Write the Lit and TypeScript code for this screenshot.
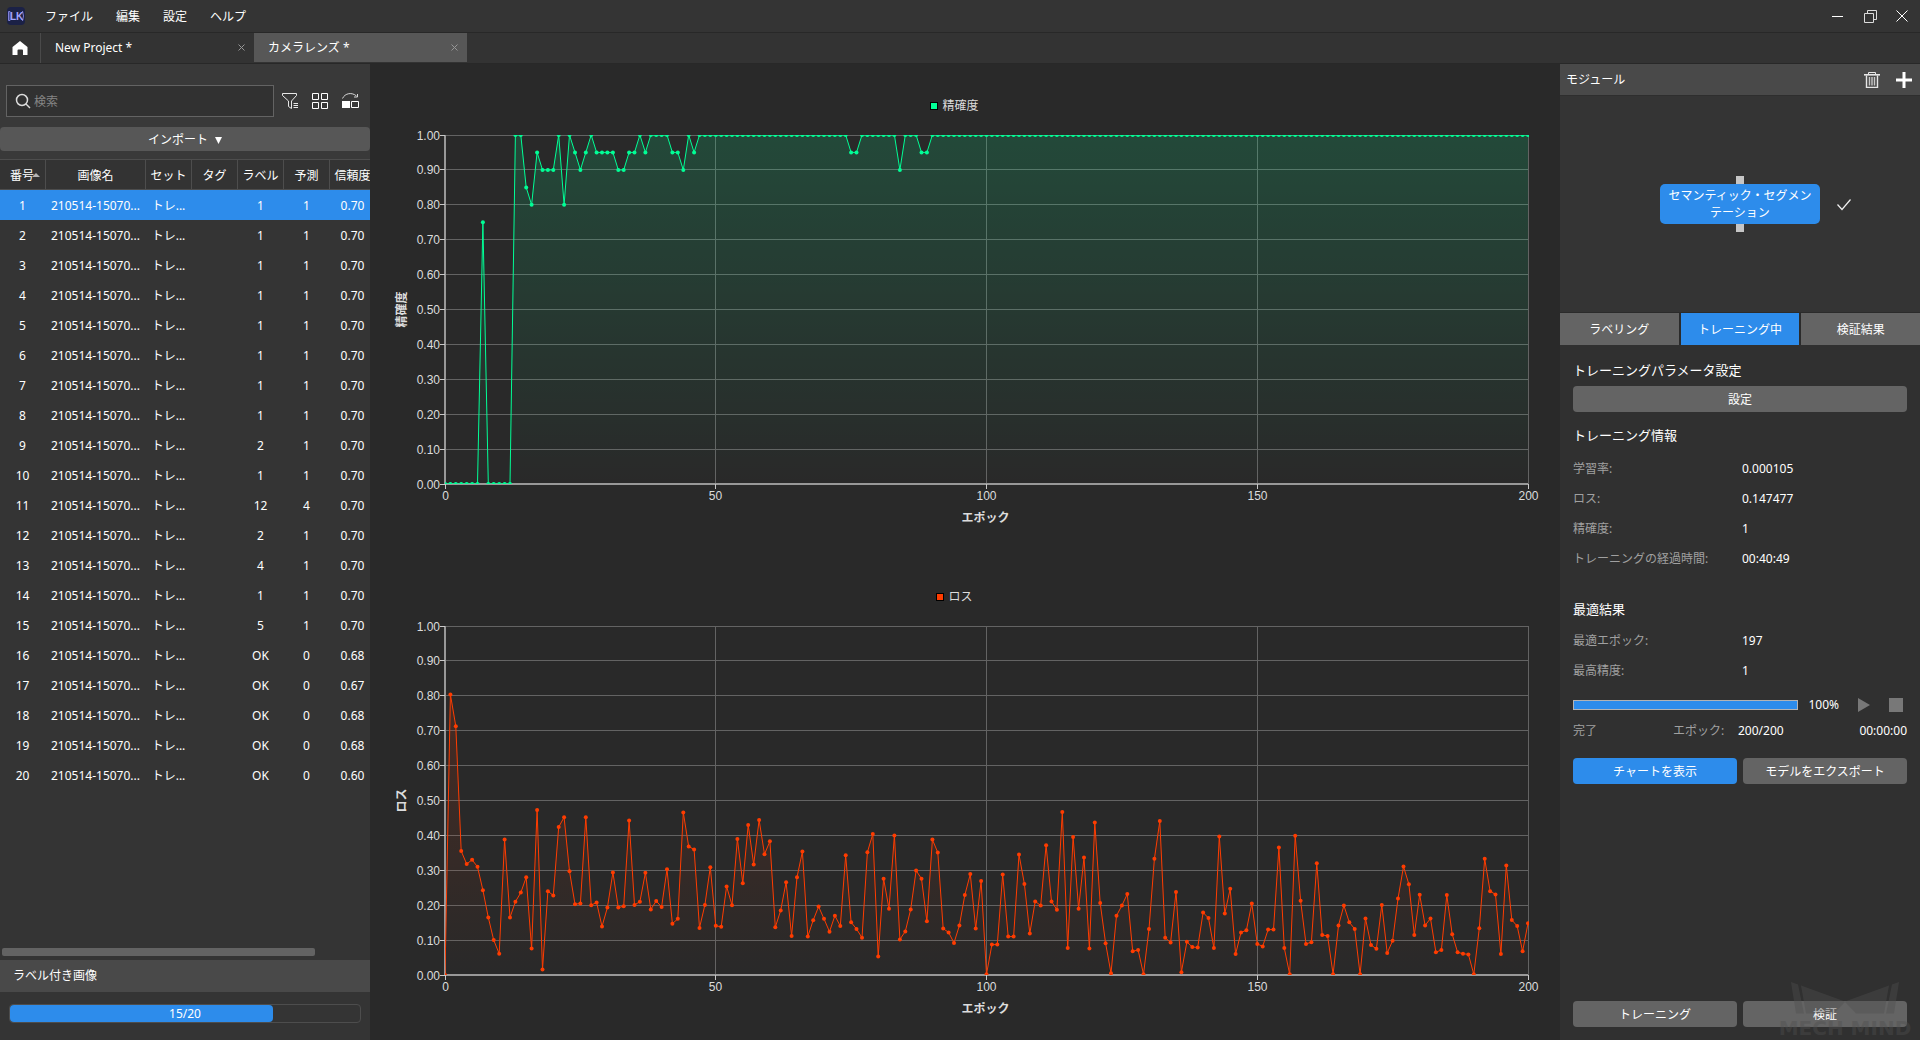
import { LitElement, html, svg, css, nothing } from "lit";
import { customElement, property, state } from "lit/decorators.js";
import { classMap } from "lit/directives/class-map.js";
import { styleMap } from "lit/directives/style-map.js";

/** Accuracy per epoch: runs of [value, number of epochs]. */
const ACCURACY_RUNS: Array<[number, number]> = [
  [0, 7], [0.75, 1], [0, 5], [1, 2], [0.85, 1], [0.8, 1], [0.95, 1], [0.9, 3],
  [1, 1], [0.8, 1], [1, 1], [0.95, 1], [0.9, 1], [0.95, 1], [1, 1], [0.95, 4],
  [0.9, 2], [0.95, 2], [1, 1], [0.95, 1], [1, 4], [0.95, 2], [0.9, 1], [1, 1],
  [0.95, 1], [1, 28], [0.95, 2], [1, 7], [0.9, 1], [1, 3], [0.95, 2], [1, 111],
];
const ACCURACY = ACCURACY_RUNS.flatMap(([v, n]) => Array<number>(n).fill(v));

/** Loss per epoch, in thousandths. */
const LOSS = [
  0, 804, 713, 355, 318, 330, 310, 243, 165, 100, 61, 388, 165, 210, 236, 280, 76, 473, 16, 240,
  228, 424, 452, 297, 203, 205, 452, 200, 208, 139, 193, 294, 193, 197, 443, 201, 210, 293, 188, 212,
  195, 303, 147, 161, 466, 368, 360, 135, 201, 309, 141, 138, 254, 200, 390, 263, 430, 317, 444, 346,
  383, 137, 185, 266, 112, 280, 354, 110, 157, 196, 161, 124, 170, 140, 343, 151, 132, 107, 352, 404,
  53, 276, 190, 400, 102, 125, 188, 299, 276, 154, 388, 351, 133, 122, 92, 142, 229, 289, 133, 269,
  2, 87, 87, 288, 110, 110, 345, 261, 119, 211, 199, 372, 211, 187, 467, 77, 395, 190, 337, 76,
  437, 206, 91, 5, 170, 199, 232, 68, 72, 2, 132, 333, 441, 107, 93, 238, 8, 95, 80, 79,
  179, 163, 77, 397, 176, 247, 60, 122, 128, 205, 89, 82, 130, 130, 365, 77, 2, 399, 213, 89,
  94, 320, 115, 112, 2, 142, 199, 151, 132, 2, 162, 86, 75, 201, 63, 98, 219, 311, 260, 115,
  230, 142, 162, 65, 72, 229, 117, 65, 61, 59, 2, 134, 333, 240, 231, 60, 314, 158, 140, 68,
  148,
].map((v) => v / 1000);

interface ImageRow {
  id: number;
  label: string;
  predicted: string;
  confidence: string;
}

const LABELS = ["1", "1", "1", "1", "1", "1", "1", "1", "2", "1", "12", "2", "4", "1", "5", "OK", "OK", "OK", "OK", "OK"];
const CONFIDENCE: Record<number, string> = { 16: "0.68", 17: "0.67", 18: "0.68", 19: "0.68", 20: "0.60" };
const ROWS: ImageRow[] = LABELS.map((label, i) => ({
  id: i + 1,
  label,
  predicted: label === "OK" ? "0" : label === "12" ? "4" : "1",
  confidence: CONFIDENCE[i + 1] ?? "0.70",
}));

const FONT = css`12px/18px "Noto Sans", "Noto Sans CJK JP", sans-serif`;

@customElement("metric-chart")
export class MetricChart extends LitElement {
  @property() name = "";
  @property() color = "#ffffff";
  @property({ type: Number }) strength = 0.2;
  @property({ attribute: false }) values: number[] = [];
  @state() private w = 0;
  @state() private h = 0;
  private observer?: ResizeObserver;

  static styles = css`
    :host {
      display: block;
      min-width: 0;
      min-height: 0;
      overflow: hidden;
      contain: size;
    }
    svg {
      display: block;
    }
    text {
      font: 12px "Liberation Sans", "Noto Sans CJK JP", sans-serif;
      fill: #dcdcdc;
    }
    .title {
      font-weight: bold;
    }
    .grid {
      stroke: #636363;
    }
    .axis {
      stroke: #989898;
      stroke-width: 2;
    }
    .tick {
      stroke: #c8c8c8;
    }
    .series {
      fill: none;
      stroke-width: 1;
    }
  `;

  connectedCallback() {
    super.connectedCallback();
    this.observer = new ResizeObserver(() => this.measure());
    this.observer.observe(this);
  }

  disconnectedCallback() {
    this.observer?.disconnect();
    super.disconnectedCallback();
  }

  firstUpdated() {
    this.measure();
  }

  private measure() {
    this.w = this.clientWidth;
    this.h = this.clientHeight;
  }

  render() {
    const { w, h, color } = this;
    if (!w || !h) return nothing;
    const left = 75, right = w - 32, top = 71, bottom = h - 65;
    const x = (n: number) => left + (n / 200) * (right - left);
    const y = (v: number) => bottom - v * (bottom - top);
    const snap = (n: number) => Math.floor(n) + 0.5;
    const points = this.values.map((v, i) => `${x(i).toFixed(1)},${y(v).toFixed(1)}`).join(" ");
    const levels = Array.from({ length: 11 }, (_, i) => i / 10);
    const epochs = [0, 50, 100, 150, 200];
    const mid = (left + right) / 2;
    const legend = snap(mid - 38 - this.name.length * 6);
    return html`<svg width=${w} height=${h} role="img" aria-label=${this.name}>
      <defs>
        <linearGradient id="fade" x1="0" y1="0" x2="0" y2="1">
          <stop offset="0" stop-color=${color} stop-opacity=${this.strength}></stop>
          <stop offset="1" stop-color=${color} stop-opacity="0"></stop>
        </linearGradient>
        <clipPath id="plot"><rect x=${left} y=${top} width=${right - left + 1} height=${bottom - top}></rect></clipPath>
      </defs>
      <rect x=${legend} y="38.5" width="7" height="7" fill=${color} stroke="#000"></rect>
      <text x=${legend + 12} y="46">${this.name}</text>
      ${levels.map((v) => svg`<line class="grid" x1=${left} x2=${right} y1=${snap(y(v))} y2=${snap(y(v))}></line>`)}
      ${epochs.map((n) => svg`<line class="grid" y1=${top} y2=${bottom} x1=${snap(x(n))} x2=${snap(x(n))}></line>`)}
      <line class="axis" x1=${left} x2=${left} y1=${top} y2=${bottom + 1}></line>
      <line class="axis" x1=${left} x2=${right} y1=${bottom} y2=${bottom}></line>
      ${levels.map((v) => svg`
        <line class="tick" x1=${left - 5} x2=${left} y1=${snap(y(v))} y2=${snap(y(v))}></line>
        <text x=${left - 5} y=${Math.floor(y(v)) + 5} text-anchor="end">${v.toFixed(2)}</text>`)}
      ${epochs.map((n) => svg`
        <line class="tick" y1=${bottom} y2=${bottom + 5} x1=${snap(x(n))} x2=${snap(x(n))}></line>
        <text x=${snap(x(n))} y=${bottom + 16} text-anchor="middle">${n}</text>`)}
      <g clip-path="url(#plot)">
        <polygon points="${left},${bottom} ${points} ${right},${bottom}" fill="url(#fade)"></polygon>
        <polyline class="series" points=${points} stroke=${color}></polyline>
        ${this.values.map((v, i) => svg`<circle cx=${x(i).toFixed(1)} cy=${y(v).toFixed(1)} r="2" fill=${color}></circle>`)}
      </g>
      <text class="title" x=${mid - 1} y=${bottom + 38} text-anchor="middle">エポック</text>
      <text class="title" text-anchor="middle" transform="translate(36 ${(top + bottom) / 2}) rotate(-90)">${this.name}</text>
    </svg>`;
  }
}

@customElement("image-panel")
export class ImagePanel extends LitElement {
  @state() private selected = 1;

  static styles = css`
    :host {
      display: flex;
      flex-direction: column;
      min-height: 0;
      background: #343434;
      color: #fff;
      font: ${FONT};
    }
    button {
      font: inherit;
      color: inherit;
      border: 0;
      padding: 0;
      background: none;
    }
    .tools {
      background: #393939;
      padding-top: 21px;
    }
    .bar {
      display: flex;
      align-items: center;
      gap: 6px;
      padding: 0 8px 0 6px;
    }
    .search {
      flex: 1;
      display: flex;
      align-items: center;
      gap: 2px;
      height: 30px;
      margin-right: -2px;
      padding-left: 8px;
      border: 1px solid #636363;
      background: #313131;
    }
    .search input {
      flex: 1;
      min-width: 0;
      border: 0;
      outline: 0;
      padding: 2px 0 0;
      background: none;
      color: #fff;
      font: inherit;
    }
    .search input::placeholder {
      color: #858585;
    }
    .icon {
      width: 24px;
      height: 24px;
      display: grid;
      place-items: center;
    }
    .import {
      width: 100%;
      height: 24px;
      margin: 10px 0 8px;
      padding-top: 2px;
      display: flex;
      justify-content: center;
      align-items: center;
      gap: 7px;
      border-radius: 4px;
      background: #575757;
    }
    .list {
      flex: 1;
      min-height: 0;
      overflow: hidden;
    }
    table {
      width: 376px;
      table-layout: fixed;
      border-collapse: separate;
      border-spacing: 0;
    }
    .name {
      width: 99px;
    }
    th {
      height: 27px;
      padding: 2px 0 0;
      font-weight: normal;
      white-space: nowrap;
      background: #333;
      border-top: 1px solid #4d4d4d;
      border-bottom: 1px solid #4d4d4d;
      border-right: 1px solid #4d4d4d;
    }
    .sort {
      margin-left: -2px;
      margin-right: -5px;
      vertical-align: 3px;
    }
    td {
      height: 29px;
      padding: 1px 1px 0 0;
      text-align: center;
      white-space: nowrap;
    }
    .selected td {
      background: #2d8ceb;
    }
    .scroll {
      height: 8px;
      margin: 0 2px 4px;
    }
    .thumb {
      width: 313px;
      height: 8px;
      border-radius: 2px;
      background: #636363;
    }
    .caption {
      padding: 7px 13px;
      background: #494949;
    }
    .progress {
      position: relative;
      margin: 12px 9px 17px;
      height: 17px;
      border: 1px solid #4d4d4d;
      border-radius: 4px;
    }
    .fill {
      height: 100%;
      border-radius: 4px;
      background: #2d8ceb;
    }
    .count {
      position: absolute;
      inset: 0;
      text-align: center;
    }
  `;

  render() {
    const heads = ["番号", "画像名", "セット", "タグ", "ラベル", "予測", "信頼度"];
    return html`
      <div class="tools">
        <div class="bar">
          <label class="search">
            <svg width="17" height="17" viewBox="0 0 17 17" fill="none" stroke="#dcdcdc" stroke-width="1.5" aria-hidden="true">
              <circle cx="7" cy="7" r="5.5"></circle><path d="M11 11l4 4"></path>
            </svg>
            <input type="text" placeholder="検索" aria-label="検索" />
          </label>
          <button class="icon" aria-label="フィルター">
            <svg width="18" height="18" viewBox="0 0 18 18" fill="none" stroke="#e8e8e8">
              <path d="M1.5 1.5h14v2L10.500 9v7.500l-3-2V9L1.500 3.500z"></path>
              <path d="M12.500 11.500h4.500M12.500 13.500h4.500M12.500 15.500h4.500"></path>
            </svg>
          </button>
          <button class="icon" aria-label="グリッド表示">
            <svg width="18" height="18" viewBox="0 0 18 18" fill="none" stroke="#fff">
              <path d="M1.5 1.5h6v6h-6zM10.500 1.500h6v6h-6zM1.500 10.500h6v6h-6zM10.500 10.500h6v6h-6z"></path>
            </svg>
          </button>
          <button class="icon" aria-label="切り替え">
            <svg width="18" height="18" viewBox="0 0 18 18" fill="none" stroke="#fff">
              <path d="M1.5 6.5C4 1 11 0 15.500 4M16.500 2v3h-3.500" stroke="#d8d8d8"></path>
              <path d="M1 9h8v7H1z" fill="#fff" stroke="none"></path>
              <path d="M10.500 9.500h7v6h-7z"></path>
            </svg>
          </button>
        </div>
        <button class="import">インポート
          <svg width="7" height="7" viewBox="0 0 7 7" aria-hidden="true"><path d="M0 0h7L3.500 7z" fill="#fff"></path></svg>
        </button>
      </div>
      <div class="list">
        <table>
          <thead>
            <tr>
              ${heads.map((head, i) => html`<th scope="col" class=${classMap({ name: i === 1 })}>${head}${i === 0
                ? html`<svg class="sort" width="8" height="4" viewBox="0 0 8 4"><path d="M4 0l4 4H0z" fill="#b4b4b4"></path></svg>`
                : nothing}</th>`)}
            </tr>
          </thead>
          <tbody>
            ${ROWS.map((row) => html`
              <tr class=${classMap({ selected: row.id === this.selected })} @click=${() => (this.selected = row.id)}>
                <td>${row.id}</td><td>210514-15070...</td><td>トレ...</td><td></td>
                <td>${row.label}</td><td>${row.predicted}</td><td>${row.confidence}</td>
              </tr>`)}
          </tbody>
        </table>
      </div>
      <div class="scroll"><div class="thumb"></div></div>
      <div class="caption">ラベル付き画像</div>
      <div class="progress" role="progressbar" aria-label="ラベル付き画像" aria-valuenow="15" aria-valuemax="20">
        <div class="fill" style=${styleMap({ width: `${(15 / 20) * 100}%` })}></div>
        <div class="count">15/20</div>
      </div>
    `;
  }
}

@customElement("module-panel")
export class ModulePanel extends LitElement {
  @state() private tab = 1;

  static styles = css`
    :host {
      display: flex;
      flex-direction: column;
      min-height: 0;
      background: #303030;
      color: #fff;
      font: ${FONT};
      position: relative;
    }
    button {
      font: inherit;
      color: inherit;
      border: 0;
      padding: 0;
      background: none;
    }
    .head {
      display: flex;
      align-items: center;
      gap: 8px;
      height: 31px;
      padding: 0 4px 0 6px;
      background: #494949;
      border-bottom: 1px solid #2e2e2e;
    }
    .head span {
      flex: 1;
    }
    .icon {
      width: 24px;
      height: 24px;
      display: grid;
      place-items: center;
    }
    .canvas {
      position: relative;
      height: 216px;
      display: grid;
      place-items: center;
      background: #343434;
    }
    .node {
      position: relative;
      width: 160px;
      height: 40px;
      padding: 0 6px;
      box-sizing: border-box;
      border-radius: 5px;
      background: #2d8ceb;
      line-height: 17px;
      text-align: center;
      display: grid;
      place-items: center;
    }
    .node::before,
    .node::after {
      content: "";
      position: absolute;
      left: 76px;
      width: 8px;
      height: 8px;
      background: #c6c6c6;
    }
    .node::before {
      top: -8px;
    }
    .node::after {
      bottom: -8px;
    }
    .check {
      position: absolute;
      left: 176px;
      top: 14px;
    }
    .tabs {
      display: grid;
      grid-template-columns: repeat(3, 1fr);
      gap: 2px;
      padding-top: 1px;
      background: #2b2b2b;
    }
    .tabs button {
      height: 32px;
      padding-top: 2px;
      background: #646464;
    }
    .tabs .on {
      background: #2d8ceb;
    }
    .body {
      flex: 1;
      display: flex;
      flex-direction: column;
      padding: 15px 13px 13px;
    }
    h2 {
      margin: 0;
      font-size: 13px;
      line-height: 20px;
      font-weight: normal;
    }
    .btn {
      height: 26px;
      padding-top: 1px;
      border-radius: 4px;
      background: #646464;
    }
    .wide {
      margin: 6px 0 13px;
    }
    .btn.primary {
      background: #2d8ceb;
    }
    dl {
      display: grid;
      grid-template-columns: 169px 1fr;
      grid-auto-rows: 30px;
      align-items: center;
      margin: 9px 0 0;
    }
    .info {
      margin-bottom: 25px;
    }
    .best {
      margin-top: 7px;
    }
    dt,
    .muted {
      color: #a0a0a0;
    }
    dd {
      margin: 0;
    }
    .run {
      display: flex;
      align-items: center;
      gap: 10px;
      margin-top: 8px;
    }
    .run span {
      margin-right: 4px;
    }
    .meter {
      flex: 1;
      height: 8px;
      border: 1px solid #b4b4b4;
    }
    .meter div {
      height: 100%;
      background: #2d8ceb;
    }
    .run button {
      display: grid;
      place-items: center;
      width: 22px;
      height: 22px;
    }
    .status {
      display: grid;
      grid-template-columns: 100px 65px 1fr auto;
      margin: 6px 0 18px;
    }
    .pair {
      display: grid;
      grid-template-columns: 1fr 1fr;
      gap: 6px;
    }
    .bottom {
      margin-top: auto;
    }
    .mark {
      position: absolute;
      right: 0;
      bottom: 0;
      overflow: visible;
      pointer-events: none;
      opacity: 0.4;
    }
    .mark text {
      font: bold 20px "DejaVu Sans", sans-serif;
    }
  `;

  render() {
    return html`
      <div class="head">
        <span>モジュール</span>
        <button class="icon" aria-label="削除">
          <svg width="16" height="16" viewBox="0 0 16 16" fill="none" stroke="#e6e6e6">
            <path d="M4.5 2V.5h7V2"></path><path d="M0 2.800h16" stroke-width="1.600"></path>
            <path d="M2.500 3.500v12h11v-12" stroke-width="1.400"></path>
            <path d="M5.500 5v8.500M8 5v8.500M10.500 5v8.500" stroke="#c8c8c8" stroke-width="1.400"></path>
          </svg>
        </button>
        <button class="icon" aria-label="追加">
          <svg width="16" height="16" viewBox="0 0 16 16" stroke="#fff" stroke-width="3"><path d="M8 0v16M0 8h16"></path></svg>
        </button>
      </div>
      <div class="canvas">
        <div class="node">セマンティック・セグメンテーション
          <svg class="check" width="16" height="14" viewBox="0 0 16 14" fill="none" stroke="#f0f0f0" stroke-width="1.200"><path d="M1.500 6.500l4.500 5L14.500 1.500"></path></svg>
        </div>
      </div>
      <div class="tabs">
        ${["ラベリング", "トレーニング中", "検証結果"].map((t, i) => html`
          <button class=${classMap({ on: i === this.tab })} @click=${() => (this.tab = i)}>${t}</button>`)}
      </div>
      <div class="body">
        <h2>トレーニングパラメータ設定</h2>
        <button class="btn wide">設定</button>
        <h2>トレーニング情報</h2>
        <dl class="info">
          <dt>学習率:</dt><dd>0.000105</dd>
          <dt>ロス:</dt><dd>0.147477</dd>
          <dt>精確度:</dt><dd>1</dd>
          <dt>トレーニングの経過時間:</dt><dd>00:40:49</dd>
        </dl>
        <h2>最適結果</h2>
        <dl class="best">
          <dt>最適エポック:</dt><dd>197</dd>
          <dt>最高精度:</dt><dd>1</dd>
        </dl>
        <div class="run">
          <div class="meter" role="progressbar" aria-label="トレーニング" aria-valuenow="100">
            <div style=${styleMap({ width: "100%" })}></div>
          </div>
          <span>100%</span>
          <button aria-label="開始"><svg width="12" height="14" viewBox="0 0 12 14"><path d="M0 0l12 7-12 7z" fill="#787878"></path></svg></button>
          <button aria-label="停止"><svg width="14" height="14" viewBox="0 0 14 14"><path d="M0 0h14v14H0z" fill="#787878"></path></svg></button>
        </div>
        <div class="status">
          <span class="muted">完了</span><span class="muted">エポック:</span><span>200/200</span><span>00:00:00</span>
        </div>
        <div class="pair">
          <button class="btn primary">チャートを表示</button>
          <button class="btn">モデルをエクスポート</button>
        </div>
        <div class="pair bottom">
          <button class="btn">トレーニング</button>
          <button class="btn">検証</button>
        </div>
      </div>
      <svg class="mark" width="150" height="58" viewBox="0 0 150 58" fill="#505050" aria-hidden="true">
        <path d="M21 0l7 2.500 6 29h-8zM31 3.500l44 16 44-16-5 28H86L75 20 64 31.500H36zM129 0l-7 2.500-6 29h8z"></path>
        <text x="75" y="53" text-anchor="middle">MECH MIND</text>
      </svg>
    `;
  }
}

@customElement("app-root")
export class AppRoot extends LitElement {
  static styles = css`
    :host {
      display: flex;
      flex-direction: column;
      height: 100vh;
      overflow: hidden;
      background: #292929;
      color: #fff;
      font: ${FONT};
    }
    button {
      font: inherit;
      color: inherit;
      border: 0;
      padding: 0;
      background: none;
    }
    .menu {
      display: flex;
      align-items: center;
      gap: 23px;
      height: 32px;
      padding: 0 10px 0 7px;
      background: #343434;
      border-bottom: 1px solid #282828;
    }
    .menu > button {
      padding-top: 2px;
    }
    .logo {
      margin-right: -3px;
    }
    .logo text {
      font: bold 10px "Liberation Sans", sans-serif;
      fill: #a5a5ff;
    }
    .window {
      display: flex;
      gap: 16px;
      margin-left: auto;
    }
    .window button,
    .home {
      display: grid;
      place-items: center;
    }
    .window button {
      width: 16px;
      height: 16px;
    }
    .tabs {
      display: flex;
      height: 30px;
      background: #333;
      border-bottom: 1px solid #282828;
    }
    .home {
      width: 41px;
      border-right: 1px solid #4a4a4a;
    }
    .tab {
      display: flex;
      align-items: center;
      justify-content: space-between;
      box-sizing: border-box;
      width: 213px;
      height: 29px;
      padding: 0 9px 0 14px;
    }
    .tab.on {
      background: #575757;
    }
    .tab button {
      display: grid;
      place-items: center;
      width: 8px;
      height: 16px;
    }
    main {
      flex: 1;
      min-height: 0;
      display: grid;
      grid-template-columns: 370px minmax(0, 1fr) 360px;
    }
    .charts {
      min-height: 0;
      display: grid;
      grid-template-rows: 1fr 1fr;
      gap: 6px;
    }
  `;

  private tabItem(label: string, on: boolean) {
    return html`<div class=${classMap({ tab: true, on })}>
      <span>${label}</span>
      <button aria-label="閉じる"><svg width="7" height="7" viewBox="0 0 7 7" stroke="#969696"><path d="M.5.5l6 6M6.500.5l-6 6"></path></svg></button>
    </div>`;
  }

  render() {
    return html`
      <nav class="menu">
        <svg class="logo" width="18" height="18" viewBox="0 0 18 18" aria-hidden="true">
          <rect width="18" height="18" rx="4" fill="#1b2146"></rect>
          <path d="M1.500 4.500h1.500v9H1.500zM15.500 4q2 5 0 10" fill="none" stroke="#7f80d8"></path>
          <text x="3" y="13">LK</text>
        </svg>
        <button>ファイル</button><button>編集</button><button>設定</button><button>ヘルプ</button>
        <div class="window">
          <button aria-label="最小化"><svg width="12" height="12" viewBox="0 0 12 12" stroke="#fff"><path d="M0 6.500h11"></path></svg></button>
          <button aria-label="元に戻す"><svg width="13" height="13" viewBox="0 0 13 13" fill="none" stroke="#dcdcdc"><path d="M.5 3.500h9v9h-9zM3.500 3V.5h9v9H10"></path></svg></button>
          <button aria-label="閉じる"><svg width="12" height="12" viewBox="0 0 12 12" stroke="#fff"><path d="M.5.5l11 11M11.500.5l-11 11"></path></svg></button>
        </div>
      </nav>
      <div class="tabs">
        <button class="home" aria-label="ホーム">
          <svg width="16" height="14" viewBox="0 0 16 14"><path d="M8 0l7.500 6v8H11V9.500q0-1-1-1H6.500q-1 0-1 1V14H.5V6z" fill="#fff"></path></svg>
        </button>
        ${this.tabItem("New Project *", false)}
        ${this.tabItem("カメラレンズ *", true)}
      </div>
      <main>
        <image-panel></image-panel>
        <div class="charts">
          <metric-chart name="精確度" color="#00ff96" .strength=${0.15} .values=${ACCURACY}></metric-chart>
          <metric-chart name="ロス" color="#ff3c00" .strength=${0.14} .values=${LOSS}></metric-chart>
        </div>
        <module-panel></module-panel>
      </main>
    `;
  }
}
